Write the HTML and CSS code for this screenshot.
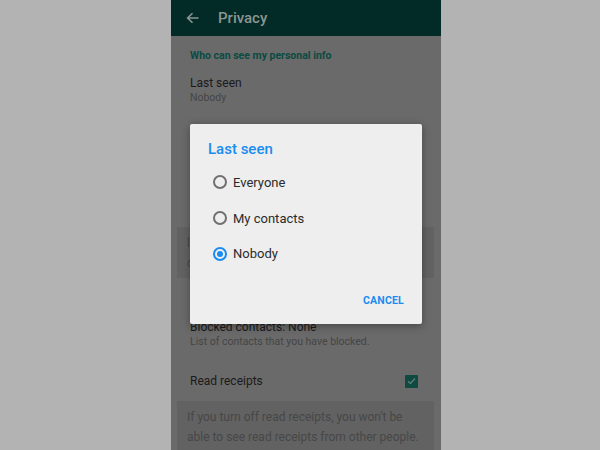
FILE: index.html
```html
<!DOCTYPE html>
<html lang="en">
  <head>
    <meta charset="UTF-8" />
    <title>Privacy</title>
    <link rel="stylesheet" href="styles.css">
  </head>
  <body>
    <div class="phone">
      <div class="appbar">
        <svg class="back" width="13" height="12" viewBox="0 0 13 12">
          <path d="M12.5 6H2M6.5 1.2L1.6 6l4.9 4.8" fill="none" stroke="#8a9592" stroke-width="1.6"/>
        </svg>
        <span class="appbar-title">Privacy</span>
      </div>

      <div class="content">
        <div class="section-title">Who can see my personal info</div>

        <div class="item first">
          <div class="item-title">Last seen</div>
          <div class="item-sub">Nobody</div>
        </div>

        <!-- rows hidden behind the dialog -->
        <div class="spacer"></div>

        <div class="note hidden-note">
          l<br>c
        </div>

        <div class="section-title lower"></div>

        <div class="item blocked">
          <div class="item-title">Blocked contacts: None</div>
          <div class="item-sub">List of contacts that you have blocked.</div>
        </div>

        <div class="row">
          <span class="item-title">Read receipts</span>
          <span class="checkbox">
            <svg width="9" height="8" viewBox="0 0 9 8">
              <path d="M1 4.2l2.4 2.3L8 1.5" fill="none" stroke="#5f7b75" stroke-width="1.4"/>
            </svg>
          </span>
        </div>

        <div class="note">
          If you turn off read receipts, you won't be<br>
          able to see read receipts from other people.<br>
          Read receipts are always sent for group chats.
        </div>
      </div>

      <div class="dialog">
        <div class="dialog-title">Last seen</div>
        <label class="option"><span class="radio"></span>Everyone</label>
        <label class="option"><span class="radio"></span>My contacts</label>
        <label class="option"><span class="radio checked"></span>Nobody</label>
        <div class="dialog-actions">
          <span class="btn">CANCEL</span>
        </div>
      </div>
    </div>
  </body>
</html>
```

FILE: styles.css
```css
body {
  margin: 0;
  background-color: #b3b3b3;
  font-family: Roboto, "Liberation Sans", sans-serif;
}
.phone {
  position: relative;
  width: 270px;
  height: 450px;
  margin-left: 171px;
  background-color: #6a6a6a;
  overflow: hidden;
}
.appbar {
  height: 36px;
  background-color: #022a26;
  display: flex;
  align-items: center;
  padding-left: 15px;
}
.back {
  margin-right: 19px;
}
.appbar-title {
  color: #8a9592;
  font-size: 15px;
  font-weight: 500;
}
.section-title {
  margin-top: 10px;
  height: 20px;
  line-height: 20px;
  padding-left: 19px;
  color: #0c4b42;
  font-size: 10.5px;
  font-weight: 700;
}
.section-title.lower {
  margin-top: 12px;
}
.item {
  padding-left: 19px;
}
.item.first {
  margin-top: 9px;
  height: 31px;
}
.item-title {
  color: #1a1a1a;
  font-size: 12px;
  line-height: 16px;
}
.item-sub {
  color: #454545;
  font-size: 10.5px;
  line-height: 14px;
}
.spacer {
  height: 121px;
}
.item.blocked {
  margin-top: 9px;
  height: 42px;
}
.hidden-note {
  height: 51px;
  box-sizing: border-box;
  line-height: 16px;
  padding-top: 10px;
}
.row {
  height: 40px;
  padding: 0 23px 0 19px;
  display: flex;
  align-items: center;
  justify-content: space-between;
}
.checkbox {
  width: 13px;
  height: 13px;
  border-radius: 1px;
  background-color: #0d4a41;
  display: flex;
  align-items: center;
  justify-content: center;
}
.note {
  margin: 0 7px 0 6px;
  padding: 6px 10px 0 10px;
  background-color: #626262;
  color: #474747;
  font-size: 12px;
  line-height: 20px;
}
.dialog {
  position: absolute;
  left: 19px;
  top: 124px;
  width: 232px;
  height: 200px;
  box-sizing: border-box;
  padding: 14px 18px 0 18px;
  background-color: #eeeeee;
  border-radius: 2px;
  box-shadow: 0 2px 8px rgba(0, 0, 0, 0.35);
}
.dialog-title {
  color: #1a8cf0;
  font-size: 15px;
  font-weight: 500;
  line-height: 20px;
  margin-top: 1px;
  margin-bottom: 5px;
}
.option {
  height: 36px;
  display: flex;
  align-items: center;
  padding-left: 5px;
  color: #2b2b2b;
  font-size: 13px;
}
.option:nth-of-type(n+3) {
  margin-top: -0.5px;
}
.radio {
  width: 14px;
  height: 14px;
  box-sizing: border-box;
  border: 2px solid #707070;
  border-radius: 50%;
  margin-right: 6px;
  display: flex;
  align-items: center;
  justify-content: center;
}
.radio.checked {
  border-color: #1a8cf0;
}
.radio.checked::after {
  content: "";
  width: 6px;
  height: 6px;
  border-radius: 50%;
  background-color: #1a8cf0;
}
.dialog-actions {
  margin-top: 22px;
  display: flex;
  justify-content: flex-end;
}
.btn {
  color: #1a8cf0;
  font-size: 10.5px;
  font-weight: 700;
  line-height: 14px;
  letter-spacing: 0.2px;
}
```
